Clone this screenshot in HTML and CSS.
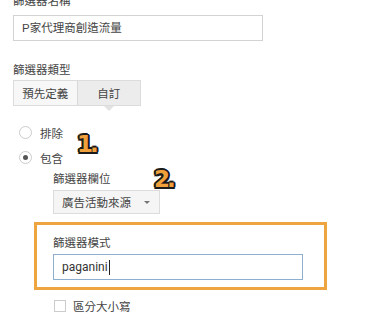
FILE: index.html
```html
<!DOCTYPE html>
<html lang="zh-Hant">
<head>
<meta charset="utf-8">
<link rel="stylesheet" href="styles.css">
</head>
<body>
<div class="page">
  <div class="label first">篩選器名稱</div>
  <div class="textbox name">P家代理商創造流量</div>

  <div class="label type-label">篩選器類型</div>
  <div class="btn-group">
    <div class="btn btn-left">預先定義</div>
    <div class="btn btn-right">自訂<span class="pointer"></span></div>
  </div>

  <div class="radios">
    <div class="radio-row"><span class="radio"></span><span>排除</span></div>
    <div class="radio-row"><span class="radio checked"></span><span>包含</span></div>
    <span class="note note1">1.</span>
  </div>

  <div class="field">
    <div class="label">篩選器欄位</div>
    <div class="select"><span>廣告活動來源</span><span class="arrow"></span></div>
    <span class="note note2">2.</span>
  </div>

  <div class="highlight">
    <div class="label">篩選器模式</div>
    <div class="textbox pattern">paganini<span class="caret"></span></div>
  </div>

  <div class="check-row"><span class="checkbox"></span><span>區分大小寫</span></div>
</div>
</body>
</html>
```
FILE: styles.css
```css
html, body {
  margin: 0;
  padding: 0;
  background: #ffffff;
}
body {
  width: 382px;
  height: 328px;
  overflow: hidden;
  font-family: "Liberation Sans", Arial, "Noto Sans CJK TC", sans-serif;
  font-size: 11.5px;
  color: #444444;
}
.page {
  padding-left: 13px;
}
.label {
  font-size: 11.5px;
  line-height: 16px;
  height: 16px;
  color: #444444;
}
.label.first {
  margin-top: -7px;
}
.textbox {
  box-sizing: border-box;
  border: 1px solid #d3d3d3;
  height: 26px;
  line-height: 24px;
  padding-left: 8px;
  font-size: 11.5px;
  color: #444;
  background: #fff;
}
.textbox.name {
  width: 250px;
  margin-top: 6px;
}
.type-label {
  margin-top: 21px;
}
.btn-group {
  display: flex;
  margin-top: 2px;
  width: 128px;
  height: 26px;
  box-sizing: border-box;
  border: 1px solid #dcdcdc;
}
.btn {
  position: relative;
  flex: 1;
  display: flex;
  align-items: center;
  justify-content: center;
  font-size: 11.5px;
  color: #444;
}
.btn-left {
  background: #f7f7f7;
  border-right: 1px solid #d8d8d8;
}
.btn-right {
  background: #ececec;
}
.pointer {
  position: absolute;
  left: 26px;
  bottom: -6px;
  width: 0;
  height: 0;
  border-left: 5px solid transparent;
  border-right: 5px solid transparent;
  border-top: 5px solid #e2e2e2;
}
.radios {
  position: relative;
  margin-top: 14px;
  padding-left: 6px;
}
.radio-row {
  display: flex;
  align-items: center;
  gap: 8px;
  height: 25px;
  font-size: 11.5px;
  color: #444;
}
.radio {
  box-sizing: border-box;
  width: 13px;
  height: 13px;
  border: 1px solid #cccccc;
  border-radius: 50%;
  background: #fff;
  display: flex;
  align-items: center;
  justify-content: center;
}
.radio.checked::after {
  content: "";
  width: 5px;
  height: 5px;
  border-radius: 50%;
  background: #555;
}
.note {
  position: absolute;
  font-family: "DejaVu Sans", sans-serif;
  font-weight: bold;
  font-size: 23px;
  line-height: 25px;
  color: #f0a03a;
  letter-spacing: -3px;
  text-shadow:
    2px 0 0 #1a1a1a, -2px 0 0 #1a1a1a, 0 2px 0 #1a1a1a, 0 -2px 0 #1a1a1a,
    1.5px 1.5px 0 #1a1a1a, -1.5px 1.5px 0 #1a1a1a, 1.5px -1.5px 0 #1a1a1a, -1.5px -1.5px 0 #1a1a1a;
}
.note1 {
  left: 64px;
  top: 12px;
}
.field {
  position: relative;
  margin-top: 1px;
  margin-left: 40px;
}
.note2 {
  left: 101px;
  top: -4px;
}
.select {
  box-sizing: border-box;
  margin-top: 3px;
  width: 107px;
  height: 24px;
  border: 1px solid #dcdcdc;
  background: #f5f5f5;
  display: flex;
  align-items: center;
  justify-content: space-between;
  padding: 0 9px 0 8px;
  font-size: 11.5px;
  color: #444;
}
.arrow {
  width: 0;
  height: 0;
  border-left: 3px solid transparent;
  border-right: 3px solid transparent;
  border-top: 3px solid #777;
}
.highlight {
  box-sizing: border-box;
  margin-top: 8px;
  margin-left: 21px;
  width: 293px;
  height: 68px;
  border: 3px solid #eea43f;
  padding: 10px 0 0 16px;
}
.textbox.pattern {
  margin-top: 3px;
  width: 250px;
  border-color: #8eaed0;
  display: flex;
  align-items: center;
  font-family: Roboto, "Liberation Sans", sans-serif;
  font-size: 12px;
  color: #333;
}
.caret {
  display: inline-block;
  width: 1px;
  height: 15px;
  background: #222;
  margin-left: 1px;
}
.check-row {
  display: flex;
  align-items: center;
  gap: 7px;
  margin-top: 8px;
  margin-left: 41px;
  height: 16px;
  font-size: 11.5px;
  color: #444;
}
.checkbox {
  box-sizing: border-box;
  width: 12px;
  height: 12px;
  border: 1px solid #cccccc;
  background: #fff;
}
```
